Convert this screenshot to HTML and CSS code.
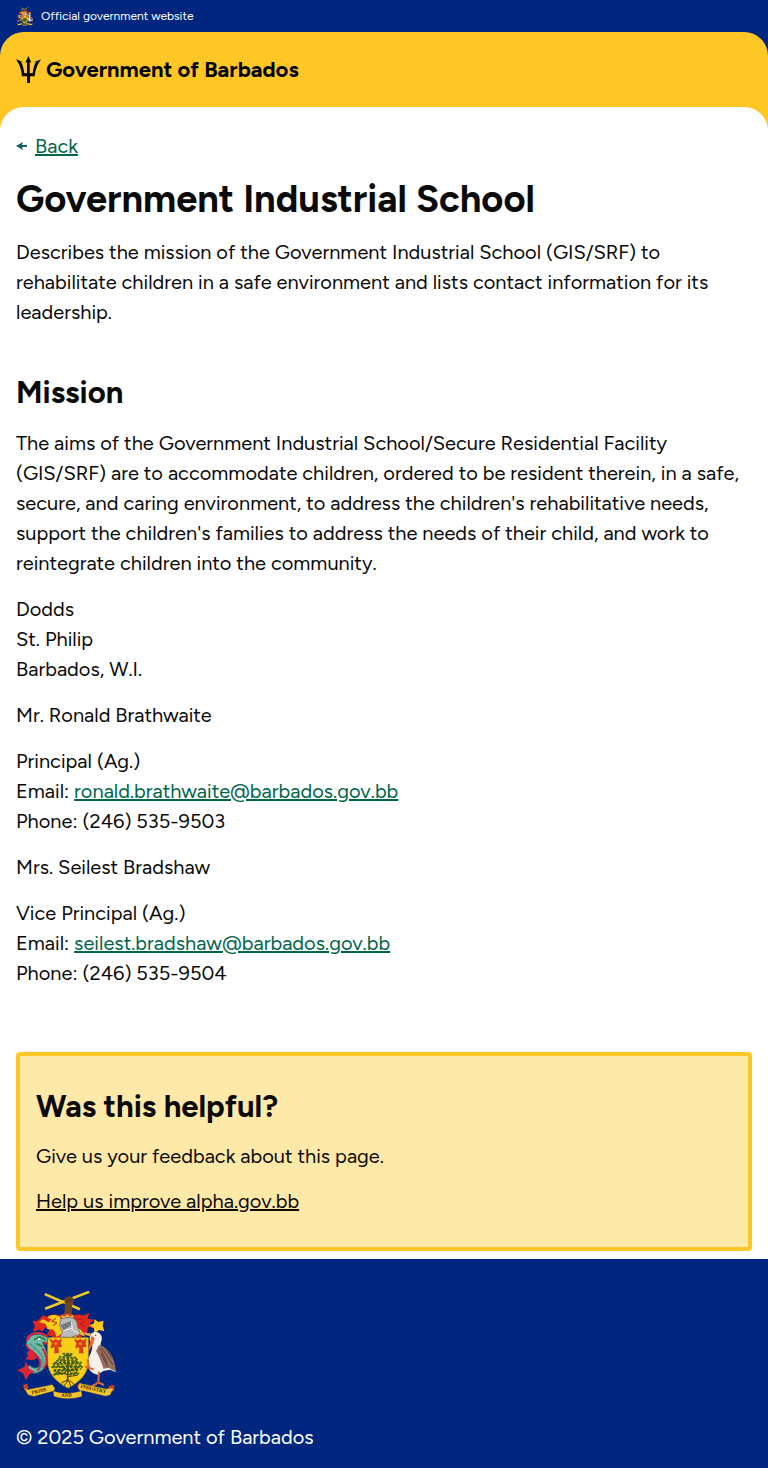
FILE: index.html
```html
<!DOCTYPE html>
<html lang="en">
<head>
<meta charset="utf-8">
<meta name="viewport" content="width=device-width, initial-scale=1">
<title>Government Industrial School</title>
<link rel="stylesheet" href="styles.css">
</head>
<body>
<div class="official"><svg class="official-arms" viewBox="18 18 300 324" aria-hidden="true"><use href="#arms"/></svg><span>Official government website</span></div>
<div class="header-back">
  <header class="header">
    <a class="brand" href="#">
      <svg class="trident" viewBox="0 0 75 81" aria-hidden="true"><path d="m37 0 9 20-5-2v34h9c2-14 4-25 10-34l-7 1c9-3 15-6 22-9l-5 8c-8 11-12 27-14 43H42v20h-9V61H18C16 43 12 28 5 18L0 10c7 3 14 6 22 9l-7-1c6 10 8 21 10 34h8V18l-5 2z"/></svg>
      <span>Government of Barbados</span>
    </a>
  </header>
</div>
<div class="main-back">
  <main class="main">
    <a class="back" href="#"><svg class="arrow" viewBox="0 0 12 12" aria-hidden="true"><path d="m0 6 7-4-1 3h5v2H6l1 3z"/></svg><span>Back</span></a>
    <h1>Government Industrial School</h1>
    <p class="lead">Describes the mission of the Government Industrial School (GIS/SRF) to rehabilitate children in a safe environment and lists contact information for its leadership.</p>
    <section class="content">
      <h2>Mission</h2>
      <p>The aims of the Government Industrial School/Secure Residential Facility (GIS/SRF) are to accommodate children, ordered to be resident therein, in a safe, secure, and caring environment, to address the children's rehabilitative needs, support the children's families to address the needs of their child, and work to reintegrate children into the community.</p>
      <p>Dodds<br>St. Philip<br>Barbados, W.I.</p>
      <p>Mr. Ronald Brathwaite</p>
      <p>Principal (Ag.)<br>Email: <a href="mailto:ronald.brathwaite@barbados.gov.bb">ronald.brathwaite@barbados.gov.bb</a><br>Phone: (246) 535-9503</p>
      <p>Mrs. Seilest Bradshaw</p>
      <p>Vice Principal (Ag.)<br>Email: <a href="mailto:seilest.bradshaw@barbados.gov.bb">seilest.bradshaw@barbados.gov.bb</a><br>Phone: (246) 535-9504</p>
    </section>
    <section class="feedback">
      <h2>Was this helpful?</h2>
      <p>Give us your feedback about this page.</p>
      <p><a href="#">Help us improve alpha.gov.bb</a></p>
    </section>
  </main>
</div>
<footer class="footer">
  <svg class="footer-arms" viewBox="18 18 300 324" role="img" aria-label="Coat of arms of Barbados">
    <g id="arms">
    <!-- crossed sugar canes held by a hand -->
    <g stroke="#f0c526" stroke-width="8" stroke-linecap="square"><path d="M108 29 206 71M109 70 234 22"/></g>
    <path d="M163 45c1-8 8-11 17-10 10 0 13 7 10 17l-4 11 1 32h-25l3-32z" fill="#714522"/>
    <path d="m168 48 14-8m-10 13 14-8" stroke="#3c2413" stroke-width="2"/>
    <!-- mantling -->
    <path d="M155 92c-20-6-36-5-43 3l-13-4-16 16-16 2 8 13-7 19 18-7 12 5 8-12 12 9-8 14 17 4-5 18 18-9 21 6z" fill="#dd281b"/>
    <path d="M151 96c-17-8-31-8-39 2l13 5-9 9-17-9-12 8 20 6 5 14 20 4 8 20 19-11z" fill="#ffcb19"/>
    <path d="M176 94c18-6 33-8 44-2l18-9-5 18 21 3-15 11 16 15-21-4-3 18-15-3-2 20-19-9-20 7z" fill="#e1291b"/>
    <path d="m254 103 11 8 16-4-3 15 5 17-15-4-15 10-1-15-14-10 13-4zM198 126l15 9 13 20-17-7-15 10-8-17z" fill="#ffc91b"/>
    <path d="m181 96 18 7 16-1 9 9-14 5 15 9m-87-25-13 9 16 4-12 9" fill="none" stroke="#a92217" stroke-width="3"/>
    <!-- helmet -->
    <path d="M151 91c9-7 33-8 43 1l-3 8-38 1z" fill="#d73922"/>
    <path d="m154 93 9 6 9-8 8 8 9-6" fill="none" stroke="#f1d13a" stroke-width="5"/>
    <path d="m152 101 31-4c13 4 19 13 19 27l9 23-27 10-34-1 7-16-8-17z" fill="#b9babb" stroke="#646568" stroke-width="2"/>
    <path d="m151 121 31-13 2 13-23 15z" fill="#77797b"/><path d="m184 111 4 24 19 11m-46-9 25-7" stroke="#eee" stroke-width="3" fill="none"/>
    <!-- shield -->
    <path d="M113 158h122v69c0 38-26 64-61 82-35-18-61-44-61-82z" fill="#f9ce19" stroke="#be9718" stroke-width="2"/>
    <g id="flower" fill="#db3b18" stroke="#a62815" stroke-width="1"><path d="m119 162 11 5 7-5 7 5 11-5-3 13 3 11-11-1 2 19h-13l2-18-13 3 4-13z"/><circle cx="137" cy="176" r="6" fill="#f37a1e"/></g>
    <use href="#flower" x="74"/>
    <!-- bearded fig tree -->
    <g fill="none" stroke="#4b3514"><path d="m174 205-1 84" stroke-width="5"/><path d="m174 240-22-20m23 35-34-14m34 28-37-8m38-16 27-22m-27 38 36-19m-36 33 28-5m-30 14-20 10m20-8-13 19m15-19 7 22m-4-22 18 17" stroke-width="3"/></g>
    <g fill="none" stroke="#48691b" stroke-width="6" stroke-linecap="round" stroke-dasharray="3 8"><path d="m160 206 29 1m-40 8 48 3m-56 9 66 0m-76 10 84-1m-88 11 89-1m-83 12 76-2m-77 13 32-3m16 3 26-4"/></g>
    <g fill="none" stroke="#2d531c" stroke-width="5" stroke-linecap="round" stroke-dasharray="4 9"><path d="m165 211 26 0m-45 11 54 0m-65 11 78-1m-83 12 86-1m-83 12 79-3m-76 14 34-3m12 2 25-3"/></g>
    <!-- dolphin supporter -->
    <path d="M49 178c1-21 19-32 41-30l25 10-5 16-12-2 9 22c8 22 6 46-9 60-15 15-39 13-55-1l15-12c14 12 26 9 32 0 8-13-4-27-16-37-15-11-26-14-25-26z" fill="#72b9aa" stroke="#266a5b" stroke-width="2"/>
    <path d="M54 156c11-12 29-15 42-10l16 9M49 178c3 17 31 26 39 45 6 14 3 27-7 33M97 190c14 22 17 45 3 61" fill="none" stroke="#dd2637" stroke-width="6"/>
    <path d="m51 155 10-7-1 15-12 5zM70 195l-20 5 4 14-9 8 19 4 16-5zM48 230l-5 16-22 10 18 9 9 21 11-19 16-7-17-9zM100 168l15 8-11 4z" fill="#dc2637"/>
    <path d="M60 177c12 12 37 27 39 47 1 16-7 28-19 36" fill="none" stroke="#367f87" stroke-width="8" stroke-dasharray="2 3"/>
    <path d="m72 164 17-9 17 9m-27 12 18 8" fill="none" stroke="#277f45" stroke-width="5"/><circle cx="87" cy="162" r="3" fill="#fff"/>
    <!-- pelican supporter -->
    <path d="M240 150c10-15 32-10 35 5 3 13-8 21-1 31 21 10 37 31 38 51l5 25-17-8-20 4-17 11c-20-4-30-17-29-36 1-20 13-32 13-51 0-9-6-11-8-17z" fill="#f7efea"/>
    <path d="M267 180c25 6 48 34 51 81l-22-13-16 3c-7-26-16-43-22-53z" fill="#96705d"/>
    <path d="m269 188 23 47m-17-47 34 52m-36-35 20 41m-7-56 23 33" stroke="#604038" stroke-width="3"/>
    <path d="m242 145-33-4 19 10 15 3z" fill="#f3a54c"/><path d="m244 153-5 25-5 25 16-28 4-17z" fill="#f16427"/><circle cx="257" cy="151" r="2" fill="#222"/>
    <path d="m267 260-2 33-20 11m21-11 16 7m-31-47-14-4-4-26m4 25-12-4" stroke="#df6532" stroke-width="6" fill="none"/>
    <!-- motto ribbon -->
    <path d="m39 300 13-4 3 16-12 3zm80-1 12 8-8 12-9-7zm82 2 11-8 9 13-15 8zm94 3 18-5-1 19-15 3z" fill="#d4391c"/>
    <path d="m43 309 10 5 74-15 8 12-5 8c26 8 54 8 82 0l-8-10 4-14 80 17 22-3-10 21-14 3-72-17 2 18c-29 9-57 9-84 0l-2-16-58 16-18-5z" fill="#f4c52b" stroke="#9d7318" stroke-width="1"/>
    </g>
    <path id="motto-left" d="m66 328 60-14" fill="none"/><path id="motto-mid" d="M153 335q21 2 44-2" fill="none"/><path id="motto-right" d="m211 308 84 19" fill="none"/>
    <g class="motto"><text><textPath href="#motto-left">PRIDE</textPath></text><text><textPath href="#motto-mid">AND</textPath></text><text><textPath href="#motto-right">INDUSTRY</textPath></text></g>
  </svg>
  <p>© 2025 Government of Barbados</p>
</footer>
</body>
</html>
```
FILE: styles.css
```css
* { box-sizing: border-box; }
body {
  margin: 0;
  background: #00267f;
  color: #0a0a0a;
  font-family: Figtree, Lato, "Liberation Sans", sans-serif;
  font-size: 20px;
  line-height: 30px;
}
h1, h2, p { margin: 0; }
a { color: #00654a; }
.motto { font-family: "Liberation Serif", serif; font-size: 15px; font-weight: bold; fill: #30230d; }
.official { display: flex; align-items: center; gap: 8px; height: 32px; padding: 0 16px; color: #fff; font-size: 12px; line-height: 18px; }
.official-arms { width: 17px; height: 19px; }
.header-back { background: #00267f; }
.header { padding: 24px 16px; background: #ffc726; border-radius: 24px 24px 0 0; }
.brand { display: flex; align-items: center; gap: 5px; color: #000; font-size: 22px; font-weight: 700; line-height: 27px; text-decoration: none; }
.trident { width: 25px; height: 27px; }
.trident, .arrow { flex: none; }
.main-back { background: #ffc726; }
.main { padding: 23px 16px 8px; background: #fff; border-radius: 24px 24px 0 0; }
.back { display: inline-flex; align-items: center; gap: 7px; text-decoration: none; }
.back span { text-decoration: underline; }
.arrow { width: 12px; height: 12px; fill: #0e5f64; }
h1 { margin: 16px 0; font-size: 38px; line-height: 44px; }
h2 { font-size: 31px; line-height: 38px; }
.content { display: flex; flex-direction: column; gap: 16px; margin: 47px 0 64px; }
.feedback { display: flex; flex-direction: column; gap: 15px; padding: 32px 16px 31px; border: 4px solid #ffc726; border-radius: 4px; background: #ffe9a8; }
.feedback a { color: #0a0a0a; }
.footer { padding: 32px 16px 16px; color: #fff; }
.footer-arms { display: block; width: 100px; height: 108px; margin-bottom: 23px; }
```
